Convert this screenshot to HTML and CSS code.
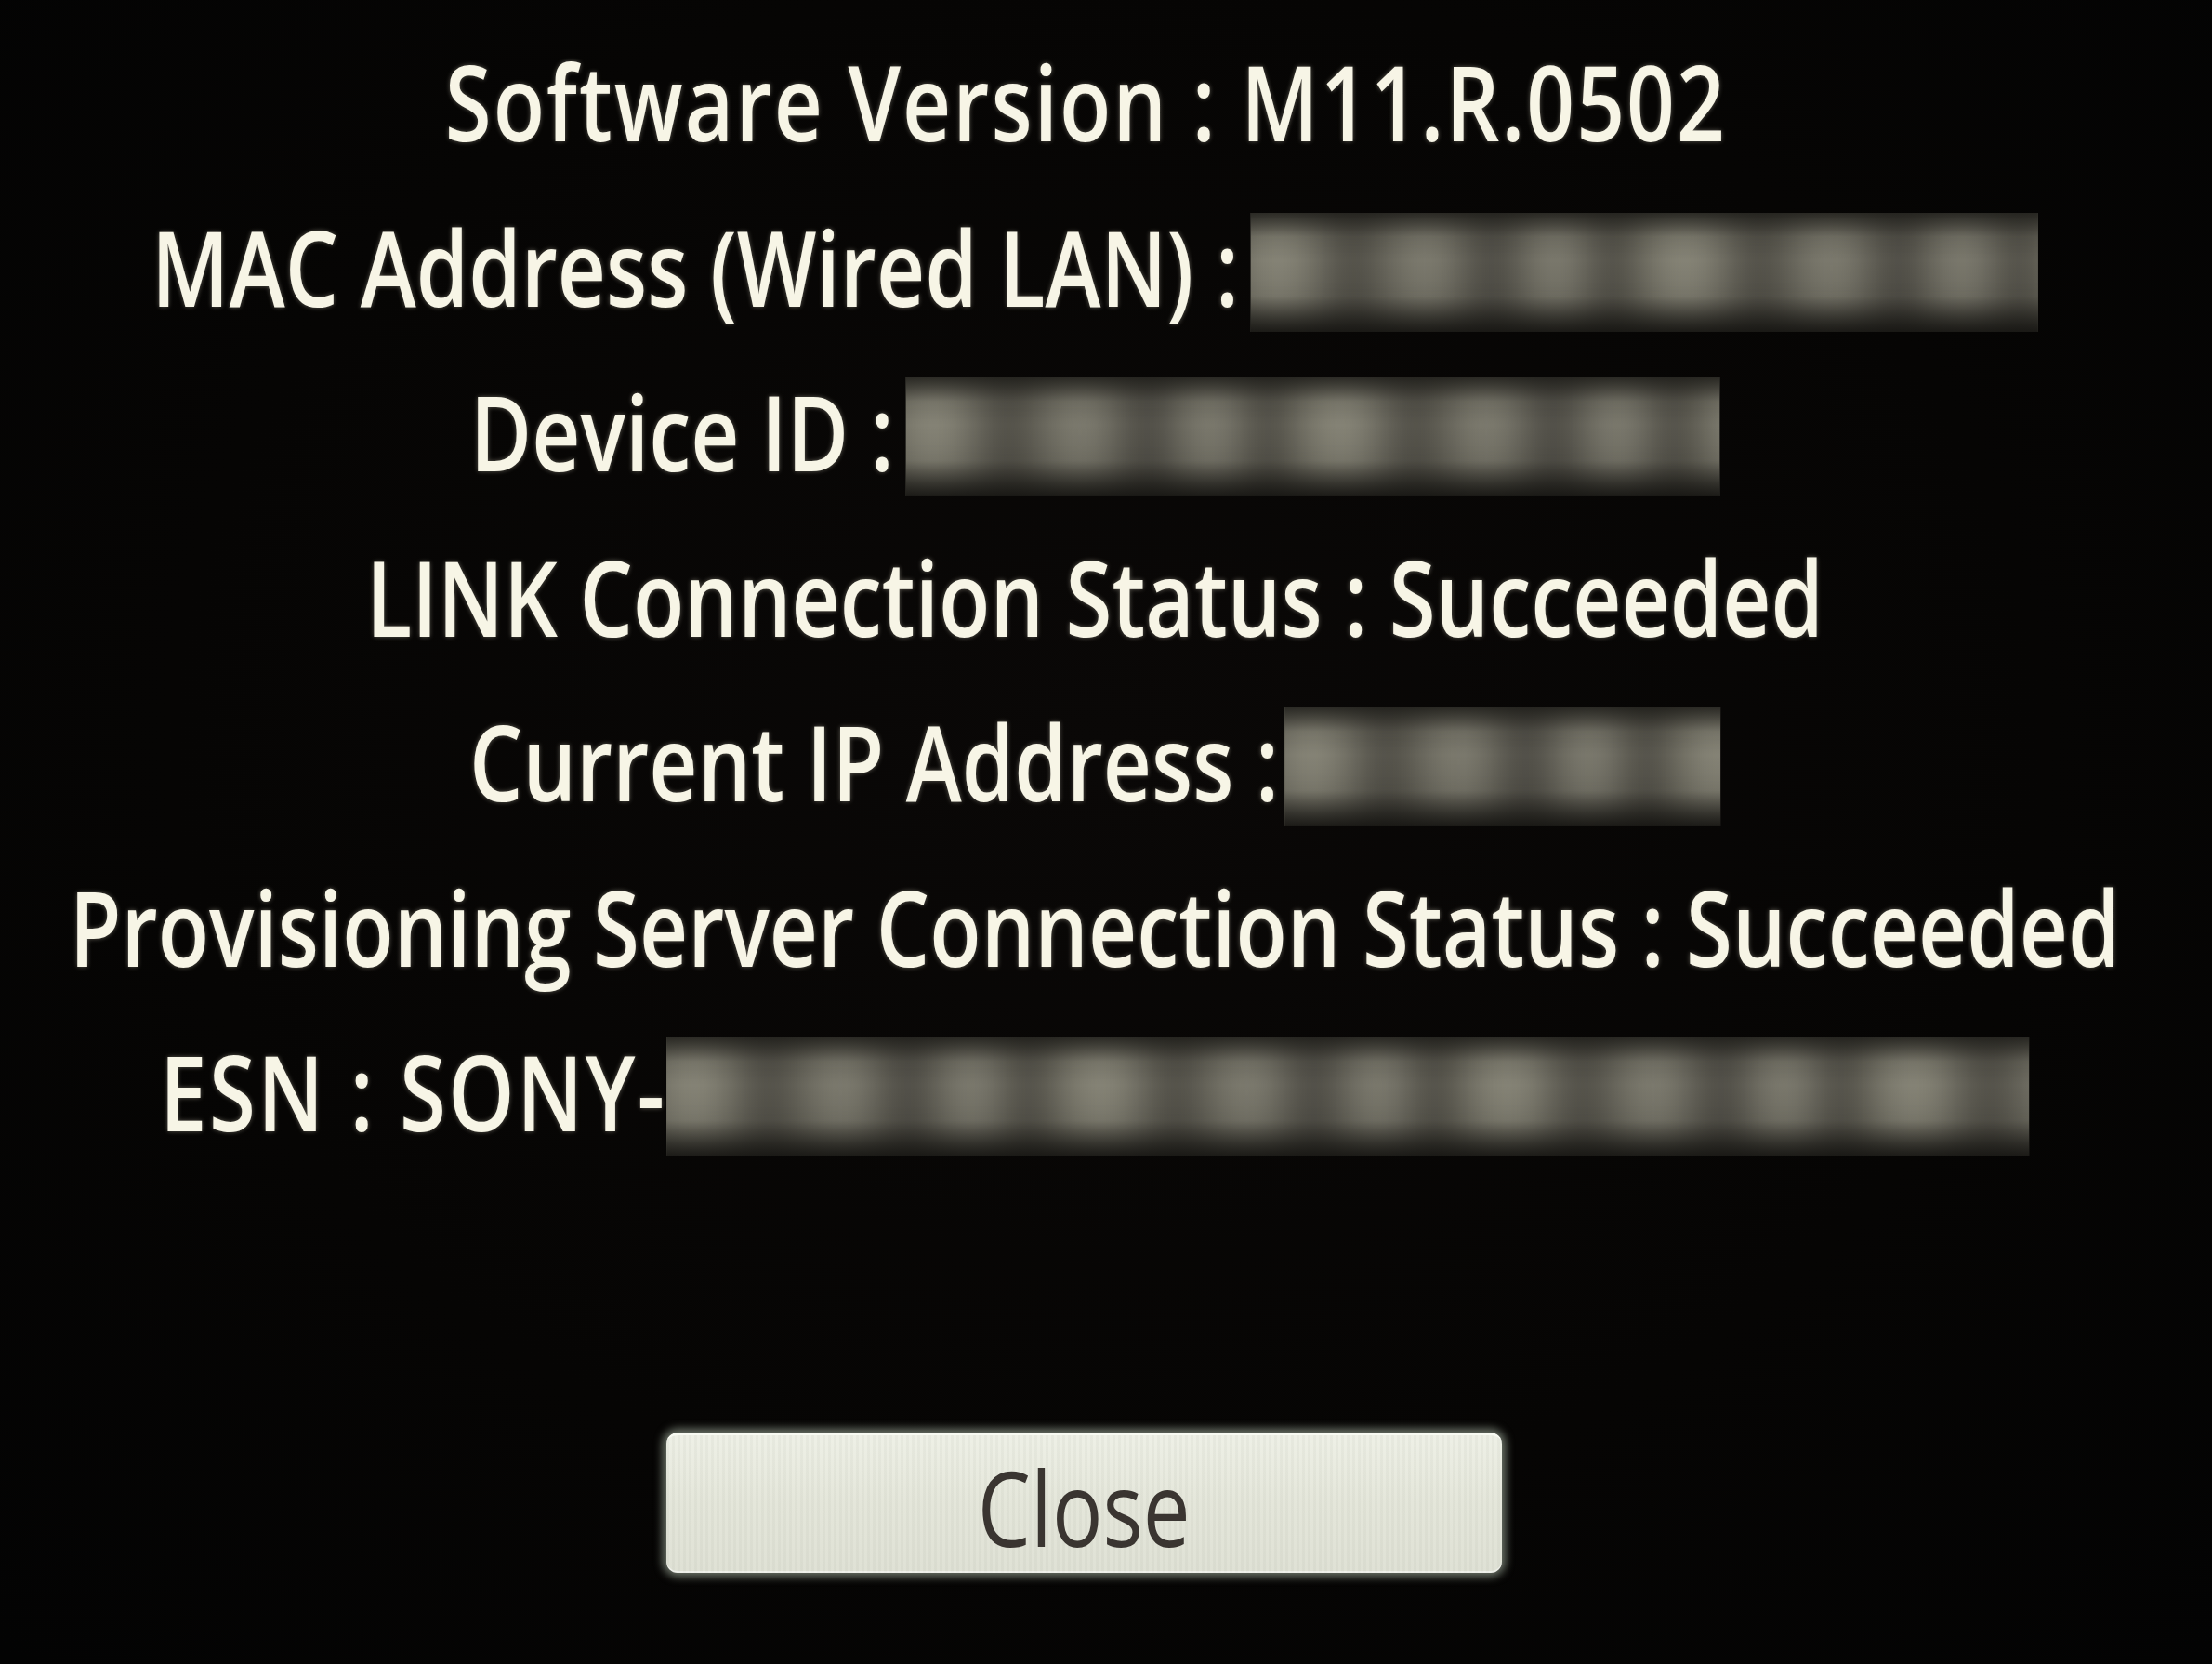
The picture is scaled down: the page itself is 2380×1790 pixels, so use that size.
FILE: index.html
```html
<!DOCTYPE html>
<html lang="en">
<head>
<meta charset="utf-8">
<title>Status Information</title>
<link rel="stylesheet" href="styles.css">
</head>
<body>
<main class="screen">
  <section class="info">
    <p class="row"><span class="line line--version">Software Version : M11.R.0502</span></p>
    <p class="row"><span class="line">MAC Address (Wired LAN) :<span class="redact redact--mac"></span></span></p>
    <p class="row"><span class="line">Device ID :<span class="redact redact--device"></span></span></p>
    <p class="row"><span class="line">LINK Connection Status : Succeeded</span></p>
    <p class="row"><span class="line">Current IP Address :<span class="redact redact--ip"></span></span></p>
    <p class="row"><span class="line">Provisioning Server Connection Status : Succeeded</span></p>
    <p class="row"><span class="line"><span class="esn-label">ESN : SONY-</span><span class="redact redact--esn"></span></span></p>
  </section>
  <button class="close" type="button"><span class="close__label">Close</span></button>
</main>
</body>
</html>
```

FILE: styles.css
```css
html, body {
  margin: 0;
  padding: 0;
  background: #060504;
}

body {
  width: 2380px;
  height: 1790px;
  overflow: hidden;
  font-family: "Open Sans", "Noto Sans", "DejaVu Sans", sans-serif;
}

.screen {
  box-sizing: border-box;
  width: 2380px;
  height: 1790px;
  padding: 20px 24px 0 0;
  display: flex;
  flex-direction: column;
  align-items: center;
  background: radial-gradient(ellipse at 50% 45%, #0a0807 0%, #060504 60%, #030303 100%);
}

.info {
  width: 100%;
  display: flex;
  flex-direction: column;
}

.row {
  margin: 0;
  height: 177.5px;
  display: flex;
  justify-content: center;
}

.line {
  display: block;
  white-space: nowrap;
  font-size: 112px;
  font-weight: 600;
  line-height: 177.5px;
  color: #f7f5e6;
  text-shadow: 0 0 6px rgba(255, 248, 225, 0.35);
  transform: scaleX(0.81);
  transform-origin: 50% 50%;
}

.line--version {
  letter-spacing: 2.5px;
  margin-right: 20px;
}

.esn-label {
  letter-spacing: 3px;
}

.redact {
  position: relative;
  display: inline-block;
  height: 128px;
  vertical-align: -27px;
  margin-left: 16px;
  overflow: hidden;
  background: #24231f;
}

.redact::before {
  content: "";
  position: absolute;
  inset: -10px -60px 0 -60px;
  background: repeating-linear-gradient(90deg,
    #45433c 0px,
    #7f7d70 60px,
    #8c8a7c 110px,
    #5d5b52 170px,
    #47453e 195px,
    #706e63 250px,
    #858376 300px,
    #55534b 360px,
    #44423c 385px,
    #7a786c 440px,
    #817f73 480px,
    #45433c 540px);
  filter: blur(24px);
}

.redact::after {
  content: "";
  position: absolute;
  inset: 0;
  background: linear-gradient(to bottom, rgba(30, 29, 25, 0.8) 0%, rgba(30, 29, 25, 0.1) 20%, rgba(30, 29, 25, 0) 40%, rgba(30, 29, 25, 0.1) 70%, rgba(22, 21, 18, 0.9) 100%);
}

.redact--mac { width: 1046px; }
.redact--device { width: 1081px; }
.redact--ip { width: 579px; margin-left: 8px; }
.redact--esn { width: 1810px; margin-left: 0; }

.close {
  margin-top: 278px;
  margin-right: 24px;
  width: 899px;
  height: 151px;
  padding: 0;
  border: none;
  border-top: 3px solid #f8faf2;
  border-radius: 12px;
  background:
    repeating-linear-gradient(90deg, rgba(120, 125, 110, 0.06) 0 3px, rgba(255, 255, 255, 0) 3px 6px),
    linear-gradient(to bottom, #eef0e6 0%, #e4e6da 50%, #dfe1d5 100%);
  box-shadow: 0 0 10px 4px rgba(215, 232, 210, 0.5), inset 0 -2px 0 rgba(255, 255, 255, 0.5);
  display: flex;
  align-items: center;
  justify-content: center;
  font-family: "Open Sans", "Noto Sans", "DejaVu Sans", sans-serif;
}

.close__label {
  display: block;
  font-size: 112px;
  font-weight: 400;
  line-height: 1;
  color: #3a3531;
  transform: scaleX(0.81);
  padding-top: 6px;
}
```
